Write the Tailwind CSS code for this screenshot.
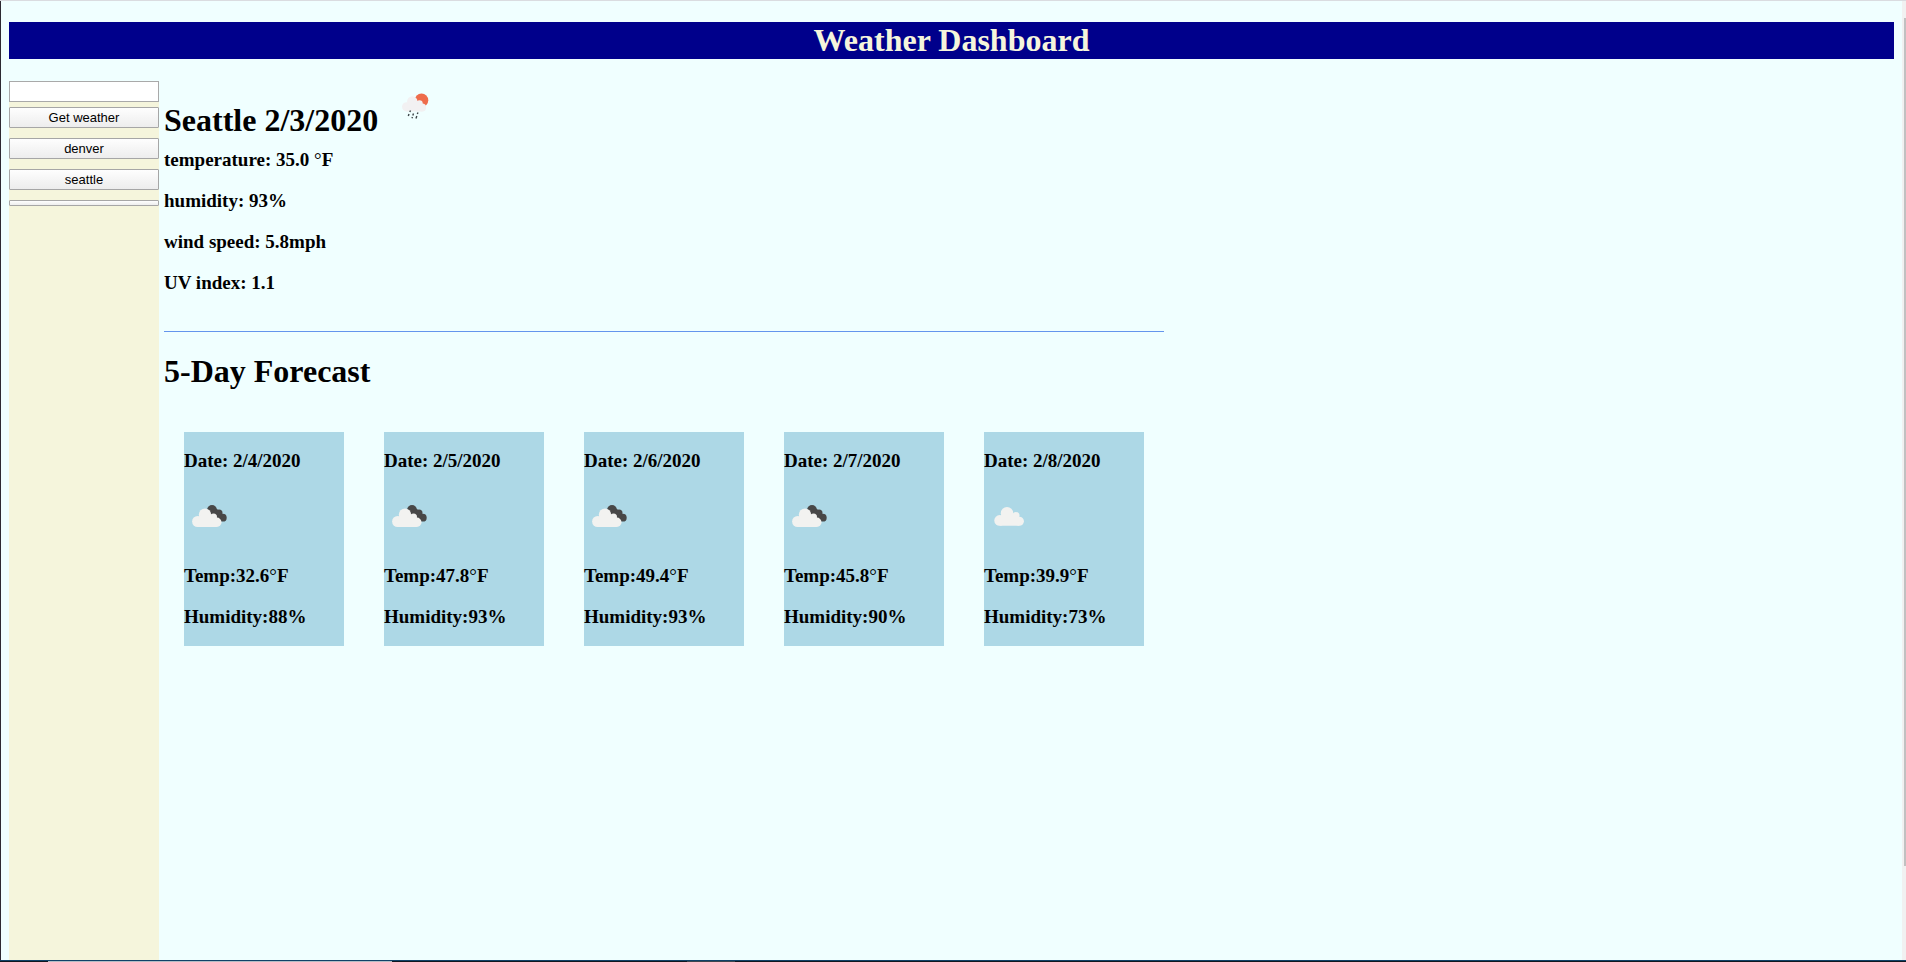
<!DOCTYPE html>
<html lang="en">
<head>
<meta charset="utf-8">
<title>Weather Dashboard</title>
<script src="https://cdn.jsdelivr.net/npm/@tailwindcss/browser@4"></script>
</head>
<body class="flex h-screen flex-col overflow-hidden bg-[#f0ffff] font-['Liberation_Serif','Times_New_Roman',serif] text-black">
<svg class="hidden" aria-hidden="true">
  <symbol id="cloud" viewBox="0 0 50 50">
    <g fill="#f2f2f0"><circle cx="15.600" cy="30.400" r="5.300"/><circle cx="23" cy="23.200" r="6.200"/><circle cx="32" cy="25.500" r="3.500"/><circle cx="35.400" cy="31.200" r="4.500"/><path d="M15.600 35.700V26l4-2h10l5 3 .8 8.700z"/></g>
  </symbol>
  <symbol id="broken" viewBox="0 0 50 50">
    <g fill="#484848"><circle cx="28" cy="20" r="4.900"/><circle cx="35" cy="23" r="3.500"/><circle cx="38.800" cy="27.700" r="3.900"/><path d="M28 20l5-1 5 5-1 7-7-3z"/></g>
    <g fill="#f2f2f0"><circle cx="13.600" cy="31.500" r="5.500"/><circle cx="21" cy="24.600" r="6.200"/><circle cx="29.500" cy="27" r="3.500"/><circle cx="32.800" cy="32.300" r="4.700"/><path d="M13.600 37V27l5-2h9l4 4 1.200 8z"/></g>
  </symbol>
  <symbol id="rain" viewBox="0 0 50 50">
    <circle cx="31.500" cy="19.300" r="6.800" fill="#ee6c4b"/>
    <g fill="#f2f1f2"><circle cx="16.600" cy="25.800" r="4.600"/><circle cx="22.300" cy="20.500" r="5.200"/><circle cx="29.500" cy="22.500" r="3.200"/><circle cx="32.200" cy="26.500" r="3.900"/><path d="M16.600 30.400V22l4-1h8l4 3v6.400z"/></g>
    <path stroke="#3d4548" stroke-width="1.400" d="M20.500 29.500l-.7 1.500M19 33l-.7 2M23.500 32.500l-.7 2M22.500 36l-.6 1.200M28 31.500l-.7 1.500M26.800 35l-.8 2.500"/>
  </symbol>
</svg>

<div class="flex min-h-0 grow border-t border-[#dadce0]">
  <div class="w-px shrink-0 bg-[#2d2a32]"></div>
  <div class="flex min-w-0 grow flex-col px-2 pt-[21px]">
    <header class="mb-[22px] shrink-0 bg-[#00008b] text-center text-[#f5f5dc]">
      <h1 class="text-[32px]/[37px] font-bold">Weather Dashboard</h1>
    </header>
    <div class="flex min-h-0 grow gap-[5px]">
      <aside class="flex w-[150px] shrink-0 flex-col gap-[10px] bg-[#f5f5dc] font-['Liberation_Sans',Arial,sans-serif] text-[13px]/[15px]">
        <form class="flex flex-col gap-[5px]">
          <input type="text" aria-label="City" class="h-[21px] w-full border border-[#a9a9a9] bg-white px-1">
          <button type="button" class="h-[21px] w-full rounded-[1px] border border-[#a6a6a6] bg-linear-to-b from-[#fefefe] to-[#ededed]">Get weather</button>
        </form>
        <button type="button" class="h-[21px] rounded-[1px] border border-[#a6a6a6] bg-linear-to-b from-[#fefefe] to-[#ededed]">denver</button>
        <button type="button" class="h-[21px] rounded-[1px] border border-[#a6a6a6] bg-linear-to-b from-[#fefefe] to-[#ededed]">seattle</button>
        <button type="button" aria-label="Empty search" class="h-[6px] rounded-[1px] border border-[#a6a6a6] bg-linear-to-b from-[#fefefe] to-[#ededed]"></button>
      </aside>
      <main class="w-full max-w-[1000px]">
        <section class="border-b border-[#6495ed] pb-[37px] text-[19px]/[22px] font-bold">
          <div class="flex items-start">
            <h2 class="pt-[21px] text-[32px]/[37px]">Seattle 2/3/2020</h2>
            <svg class="ml-3 size-[50px]" aria-hidden="true"><use href="#rain"/></svg>
          </div>
          <div class="flex flex-col gap-[19px] pt-[10px]">
            <p>temperature: 35.0 <span class="font-normal">°</span>F</p>
            <p>humidity: 93%</p>
            <p>wind speed: 5.8mph</p>
            <p>UV index: 1.1</p>
          </div>
        </section>
        <section class="pt-[21px]">
          <h2 class="text-[32px]/[37px] font-bold">5-Day Forecast</h2>
          <div class="grid grid-cols-5 gap-10 px-5 pt-[42px] text-[19px]/[22px] font-bold">
            <article class="bg-[#add8e6] py-[18px]"><h3>Date: 2/4/2020</h3><svg class="my-[18px] size-[50px]" aria-hidden="true"><use href="#broken"/></svg><p class="pt-[7px]">Temp:32.6<span class="font-normal">°</span>F</p><p class="pt-[19px]">Humidity:88%</p></article>
            <article class="bg-[#add8e6] py-[18px]"><h3>Date: 2/5/2020</h3><svg class="my-[18px] size-[50px]" aria-hidden="true"><use href="#broken"/></svg><p class="pt-[7px]">Temp:47.8<span class="font-normal">°</span>F</p><p class="pt-[19px]">Humidity:93%</p></article>
            <article class="bg-[#add8e6] py-[18px]"><h3>Date: 2/6/2020</h3><svg class="my-[18px] size-[50px]" aria-hidden="true"><use href="#broken"/></svg><p class="pt-[7px]">Temp:49.4<span class="font-normal">°</span>F</p><p class="pt-[19px]">Humidity:93%</p></article>
            <article class="bg-[#add8e6] py-[18px]"><h3>Date: 2/7/2020</h3><svg class="my-[18px] size-[50px]" aria-hidden="true"><use href="#broken"/></svg><p class="pt-[7px]">Temp:45.8<span class="font-normal">°</span>F</p><p class="pt-[19px]">Humidity:90%</p></article>
            <article class="bg-[#add8e6] py-[18px]"><h3>Date: 2/8/2020</h3><svg class="my-[18px] size-[50px]" aria-hidden="true"><use href="#cloud"/></svg><p class="pt-[7px]">Temp:39.9<span class="font-normal">°</span>F</p><p class="pt-[19px]">Humidity:73%</p></article>
          </div>
        </section>
      </main>
    </div>
  </div>
  <div class="flex w-1 shrink-0 flex-col bg-[#f1f1f1] pt-[17px] pl-[2px]"><div class="h-[90%] bg-[#c1c1c1]"></div></div>
</div>
<div class="h-px shrink-0 bg-[#0f4268]"></div>
<div class="flex h-px shrink-0 bg-[#101820]"><div class="ml-12 w-[344px] bg-[#b4bcc4]"></div><div class="ml-[295px] w-12 bg-[#3d464e]"></div></div>
</body>
</html>
